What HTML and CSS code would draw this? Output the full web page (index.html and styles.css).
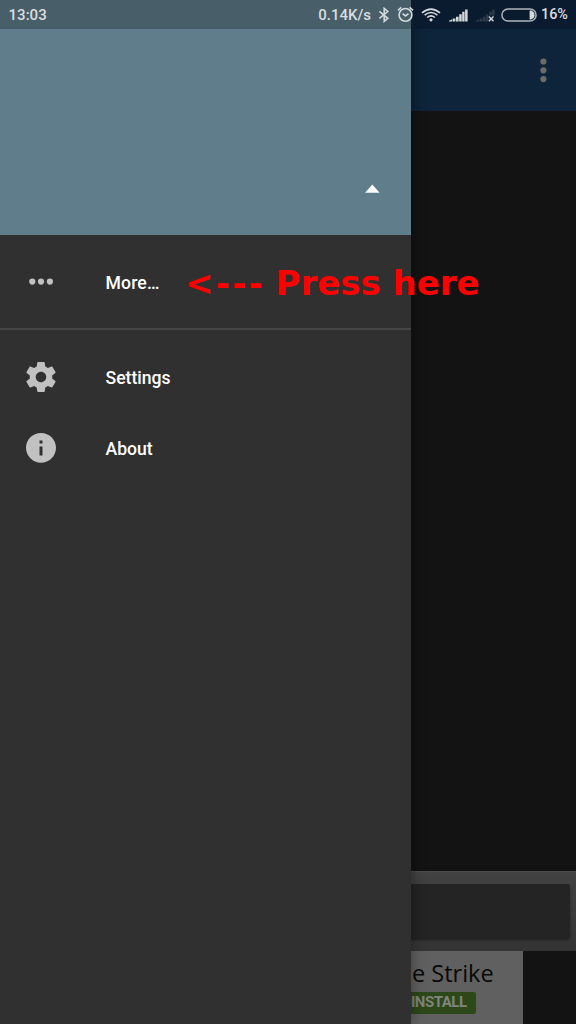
FILE: index.html
```html
<!DOCTYPE html>
<html lang="en">
<head>
<meta charset="utf-8">
<title>Navigation drawer</title>
<link rel="stylesheet" href="styles.css">
</head>
<body>
<div class="screen">
  <main class="app">
    <header class="toolbar">
      <svg class="overflow" width="8" height="26" viewBox="0 0 8 26"><circle cx="4.4" cy="4.5" r="3.1"/><circle cx="4.4" cy="13.3" r="3.1"/><circle cx="4.4" cy="22.1" r="3.1"/></svg>
    </header>
    <section class="content"></section>
    <section class="panel"><div class="field"></div></section>
    <section class="ad">
      <div class="ad-card">
        <div class="ad-title">e Strike</div>
        <div class="ad-button">INSTALL</div>
      </div>
    </section>
  </main>

  <nav class="drawer">
    <div class="account">
      <svg width="16" height="9" viewBox="0 0 16 9"><path d="M.1 8.7 7.3.6 14.6 8.7z" fill="#fff"/></svg>
    </div>
    <div class="group group-first">
      <a class="item">
        <svg class="icon" width="30" height="30" viewBox="0 0 30 30"><circle cx="6.3" cy="14.6" r="3.1"/><circle cx="15" cy="14.6" r="3.1"/><circle cx="23.9" cy="14.6" r="3.1"/></svg>
        <span class="more">More…</span>
      </a>
    </div>
    <div class="group">
      <a class="item">
        <svg class="icon" width="30" height="30" viewBox="2 2 20 20"><path d="M19.43 12.98c.04-.32.07-.64.07-.98s-.03-.66-.07-.98l2.11-1.65c.19-.15.24-.42.12-.64l-2-3.46c-.12-.22-.39-.3-.61-.22l-2.49 1c-.52-.4-1.08-.73-1.69-.98l-.38-2.65C14.46 2.18 14.25 2 14 2h-4c-.25 0-.46.18-.49.42l-.38 2.65c-.61.25-1.17.59-1.69.98l-2.49-1c-.23-.09-.49 0-.61.22l-2 3.46c-.13.22-.07.49.12.64l2.11 1.65c-.04.32-.07.65-.07.98s.03.66.07.98l-2.11 1.65c-.19.15-.24.42-.12.64l2 3.46c.12.22.39.3.61.22l2.49-1c.52.4 1.08.73 1.69.98l.38 2.65c.03.24.24.42.49.42h4c.25 0 .46-.18.49-.42l.38-2.65c.61-.25 1.17-.59 1.69-.98l2.49 1c.23.09.49 0 .61-.22l2-3.46c.12-.22.07-.49-.12-.64l-2.11-1.65zM12 15.5c-1.93 0-3.5-1.57-3.5-3.5s1.57-3.5 3.5-3.5 3.5 1.57 3.5 3.5-1.57 3.5-3.5 3.5z"/></svg>
        <span>Settings</span>
      </a>
      <a class="item">
        <svg class="icon" width="30" height="30" viewBox="2 2.3 20 20"><path d="M12 2.3C6.48 2.3 2 6.6 2 12.1s4.48 10 10 10 10-4.48 10-10S17.52 2.3 12 2.3zm1 15h-2v-6h2v6zm0-8h-2V7.3h2v2z"/></svg>
        <span>About</span>
      </a>
    </div>
  </nav>

  <div class="status">
    <span class="clock">13:03</span>
    <span class="speed">0.14K/s</span>
    <svg class="bluetooth" width="12" height="16" viewBox="0 0 12 16"><path d="M1.4 4.3 9.8 11.3 6.2 14.4V1.4L9.8 4.5 1.4 11.4"/></svg>
    <svg class="alarm" width="17" height="17" viewBox="0 0 17 17"><circle cx="8.5" cy="8.9" r="6.4"/><path d="M5.6 7.7 8.5 10 11.5 7.7M1 4.3 4.3 1.3M16 4.3 12.7 1.3"/></svg>
    <svg class="wifi" width="20" height="14" viewBox="0 0 20 14"><path d="M1 4.9Q10-2.7 19 4.9M3.6 7.2Q10 1.8 16.4 7.2M6.1 9.5Q10 6.2 13.9 9.5"/><circle cx="10" cy="11.8" r="1.6"/></svg>
    <svg class="signal" width="19" height="13" viewBox="0 0 19 13"><path d="M0 12.6V11.7L3.2 10.3V12.6zM3.8 12.6V9.6H6.4V12.6zM7 12.6V7.7H9.6V12.6zM10.2 12.6V5.3H12.7V12.6zM13.2 12.6V2.8H15.6V12.6zM16.1 12.6V.4H18.6V12.6z"/></svg>
    <svg class="signal-off" width="19" height="13" viewBox="0 0 19 13"><path class="faint" d="M0 12.6V11.7L3.2 10.3V12.6zM3.8 12.6V9.6H6.4V12.6zM7 12.6V7.7H9.6V12.6zM10.2 12.6V5.3H12.3V12.6zM13.2 6.5V2.8H15.6V6.5zM16.1 6.5V.4H18.6V6.5z"/><path class="cross" d="M12.9 7.4 17.5 12.2M17.5 7.4 12.9 12.2"/></svg>
    <svg class="battery" width="36" height="14" viewBox="0 0 36 14"><rect x=".9" y=".9" width="34.2" height="12.2" rx="6.1"/><path d="M28.6 2.4H30Q33.6 3.6 33.6 7T30 11.6H28.6z"/></svg>
    <span class="percent">16%</span>
  </div>

  <div class="note"><span class="arrow">&lt;---</span><span>Press here</span></div>
</div>
</body>
</html>
```
FILE: styles.css
```css
body {
  margin: 0;
  background: #131313;
}

.screen {
  position: relative;
  width: 576px;
  height: 1024px;
  overflow: hidden;
  font-family: Roboto, "Liberation Sans", sans-serif;
}

.app {
  display: flex;
  flex-direction: column;
  height: 100%;
  background: #131313;
}

.toolbar {
  display: flex;
  justify-content: flex-end;
  box-sizing: border-box;
  height: 111px;
  padding: 57px 29px 0 0;
  background: #0e243a;
}

.overflow { fill: #6b6b6b; }

.content { flex: 1; }

.panel {
  box-sizing: border-box;
  height: 80px;
  padding: 12px 6px 13px 300px;
  border-top: 1px solid #4b4b4b;
  background: linear-gradient(#424242, #333);
}

.field {
  height: 54px;
  border-radius: 3px;
  background: #242424;
  box-shadow: 0 2px 3px rgba(0, 0, 0, .4);
}

.ad {
  height: 73px;
  padding-left: 300px;
}

.ad-card {
  display: flex;
  flex-direction: column;
  align-items: flex-start;
  box-sizing: border-box;
  width: 222.5px;
  height: 73px;
  padding: 6px 0 0 73.5px;
  background: #606060;
}

.ad-title {
  padding-left: 38.5px;
  font: 23.5px/32px "Open Sans", sans-serif;
  color: #080808;
}

.ad-button {
  box-sizing: border-box;
  width: 102px;
  height: 22px;
  margin-top: 3px;
  padding-right: 9px;
  border-radius: 2px;
  background: #2c4819;
  color: #80847c;
  font-size: 15px;
  font-weight: 700;
  letter-spacing: -.5px;
  line-height: 21px;
  text-align: right;
}

.drawer {
  position: absolute;
  top: 0;
  left: 0;
  width: 410.7px;
  height: 1024px;
  background: #303030;
  box-shadow: 0 0 14px rgba(0, 0, 0, .4);
}

.account {
  display: flex;
  justify-content: flex-end;
  box-sizing: border-box;
  height: 235px;
  padding: 184px 29.7px 0 0;
  background: #607d8b;
}

.group { padding-top: 12px; }

.group-first {
  box-sizing: border-box;
  height: 95px;
  border-bottom: 2px solid #454545;
}

.item {
  display: flex;
  align-items: center;
  height: 70.5px;
  padding-left: 26px;
  gap: 49.5px;
  color: #fff;
  font-size: 17.6px;
  font-weight: 500;
}

.icon { fill: #c1c1c1; }

.item span { padding-top: 2px; }
.item .more { letter-spacing: .15px; }

.status {
  position: absolute;
  top: 0;
  left: 0;
  display: flex;
  align-items: center;
  box-sizing: border-box;
  width: 576px;
  height: 29px;
  padding: 0 8px 0 8.6px;
  background: linear-gradient(90deg, #485e68 411px, #0a1b2f 411px);
  color: #dadddf;
  font-size: 15px;
  font-weight: 500;
  line-height: 30px;
}

.status svg {
  flex: none;
  fill: #d5d9dc;
}

.clock { flex: 1; }
.speed { margin-right: 7px; }

.status .bluetooth,
.status .alarm {
  fill: none;
  stroke: #d5d9dc;
  stroke-width: 1.6;
}

.bluetooth { margin-right: 7px; }
.alarm { margin-right: 7px; }
.wifi { margin-right: 8px; }
.wifi path { fill: none; stroke: #d5d9dc; stroke-width: 1.6; }
.signal { margin: 1px 8px 0 0; }
.signal-off { margin: 1px 6px 0 0; }
.signal-off .faint { fill: #2f3c4c; }
.signal-off .cross { stroke: #d5d9dc; stroke-width: 1.4; }
.battery { margin-right: 4px; }
.battery rect { fill: none; stroke: #aeb4ba; stroke-width: 1.5; }

.percent {
  width: 27px;
  padding-top: 1px;
  font-size: 14.4px;
  white-space: nowrap;
}

.note {
  position: absolute;
  top: 263px;
  left: 185px;
  display: flex;
  gap: 10.5px;
  color: #f00;
  font: 700 34px/40px "DejaVu Sans", sans-serif;
  white-space: nowrap;
}

.arrow { letter-spacing: 2.3px; }
```
